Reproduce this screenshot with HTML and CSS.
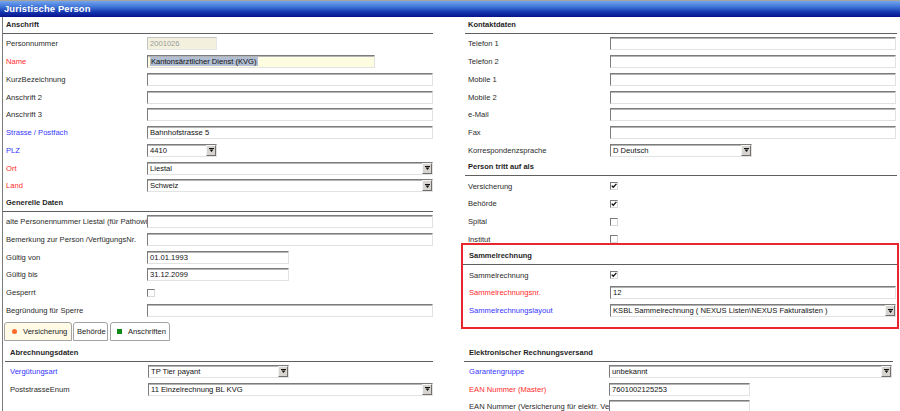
FILE: index.html
```html
<!DOCTYPE html>
<html lang="de">
<head>
<meta charset="utf-8">
<title>Juristische Person</title>
<link rel="stylesheet" href="styles.css">
</head>
<body>
<div class="titlebar">Juristische Person</div>
<div class="content">
  <div class="cols top">
    <div class="col left">
      <div class="section">
        <div class="heading">Anschrift</div>
        <div class="row"><span class="label">Personnummer</span><div class="f w70 ro">2001026</div></div>
        <div class="row"><span class="label red">Name</span><div class="f w228 req"><span class="hl">Kantonsärztlicher Dienst (KVG)</span></div></div>
        <div class="row"><span class="label">KurzBezeichnung</span><div class="f w286"></div></div>
        <div class="row"><span class="label">Anschrift 2</span><div class="f w286"></div></div>
        <div class="row"><span class="label">Anschrift 3</span><div class="f w286"></div></div>
        <div class="row"><span class="label blue">Strasse / Postfach</span><div class="f w286">Bahnhofstrasse 5</div></div>
        <div class="row"><span class="label blue">PLZ</span><div class="f sel w70"><span class="v">4410</span><span class="b"><svg viewBox="0 0 5 4" width="5" height="4"><path d="M0 0h5v1H0zM0.5 1.5h4L2.5 4z" fill="#111"/></svg></span></div></div>
        <div class="row"><span class="label red">Ort</span><div class="f sel w286"><span class="v">Liestal</span><span class="b"><svg viewBox="0 0 5 4" width="5" height="4"><path d="M0 0h5v1H0zM0.5 1.5h4L2.5 4z" fill="#111"/></svg></span></div></div>
        <div class="row"><span class="label red">Land</span><div class="f sel w286"><span class="v">Schweiz</span><span class="b"><svg viewBox="0 0 5 4" width="5" height="4"><path d="M0 0h5v1H0zM0.5 1.5h4L2.5 4z" fill="#111"/></svg></span></div></div>
      </div>
      <div class="section">
        <div class="heading">Generelle Daten</div>
        <div class="row"><span class="label">alte Personennummer Liestal (für Pathowin)</span><div class="f w286"></div></div>
        <div class="row"><span class="label">Bemerkung zur Person /VerfügungsNr.</span><div class="f w286"></div></div>
        <div class="row"><span class="label">Gültig von</span><div class="f w142">01.01.1993</div></div>
        <div class="row"><span class="label">Gültig bis</span><div class="f w142">31.12.2099</div></div>
        <div class="row"><span class="label">Gesperrt</span><span class="chk"></span></div>
        <div class="row"><span class="label">Begründung für Sperre</span><div class="f w286"></div></div>
      </div>
    </div>
    <div class="col right">
      <div class="section">
        <div class="heading">Kontaktdaten</div>
        <div class="row"><span class="label">Telefon 1</span><div class="f w286"></div></div>
        <div class="row"><span class="label">Telefon 2</span><div class="f w286"></div></div>
        <div class="row"><span class="label">Mobile 1</span><div class="f w286"></div></div>
        <div class="row"><span class="label">Mobile 2</span><div class="f w286"></div></div>
        <div class="row"><span class="label">e-Mail</span><div class="f w286"></div></div>
        <div class="row"><span class="label">Fax</span><div class="f w286"></div></div>
        <div class="row"><span class="label">Korrespondenzsprache</span><div class="f sel w142"><span class="v">D Deutsch</span><span class="b"><svg viewBox="0 0 5 4" width="5" height="4"><path d="M0 0h5v1H0zM0.5 1.5h4L2.5 4z" fill="#111"/></svg></span></div></div>
      </div>
      <div class="section">
        <div class="heading">Person tritt auf als</div>
        <div class="row"><span class="label">Versicherung</span><span class="chk"><svg viewBox="0 0 6 6" width="6" height="6"><path d="M0.7 2.6L2.3 4.3L5.4 0.9" fill="none" stroke="#111" stroke-width="1.3"/></svg></span></div>
        <div class="row"><span class="label">Behörde</span><span class="chk"><svg viewBox="0 0 6 6" width="6" height="6"><path d="M0.7 2.6L2.3 4.3L5.4 0.9" fill="none" stroke="#111" stroke-width="1.3"/></svg></span></div>
        <div class="row"><span class="label">Spital</span><span class="chk"></span></div>
        <div class="row"><span class="label">Institut</span><span class="chk"></span></div>
      </div>
      <div class="section sammel">
        <div class="heading">Sammelrechnung</div>
        <div class="row"><span class="label">Sammelrechnung</span><span class="chk"><svg viewBox="0 0 6 6" width="6" height="6"><path d="M0.7 2.6L2.3 4.3L5.4 0.9" fill="none" stroke="#111" stroke-width="1.3"/></svg></span></div>
        <div class="row"><span class="label red">Sammelrechnungsnr.</span><div class="f w286">12</div></div>
        <div class="row"><span class="label blue">Sammelrechnungslayout</span><div class="f sel w286"><span class="v">KSBL Sammelrechnung ( NEXUS Listen\NEXUS Fakturalisten )</span><span class="b"><svg viewBox="0 0 5 4" width="5" height="4"><path d="M0 0h5v1H0zM0.5 1.5h4L2.5 4z" fill="#111"/></svg></span></div></div>
      </div>
    </div>
  </div>

  <div class="tabs">
    <div class="tab active t1"><span class="dot"></span>Versicherung</div>
    <div class="tab t2">Behörde</div>
    <div class="tab t3"><span class="sq"></span>Anschriften</div>
  </div>

  <div class="cols panel">
    <div class="col left">
      <div class="section">
        <div class="heading">Abrechnungsdaten</div>
        <div class="row"><span class="label blue">Vergütungsart</span><div class="f sel w141"><span class="v">TP Tier payant</span><span class="b"><svg viewBox="0 0 5 4" width="5" height="4"><path d="M0 0h5v1H0zM0.5 1.5h4L2.5 4z" fill="#111"/></svg></span></div></div>
        <div class="row"><span class="label">PoststrasseEnum</span><div class="f sel w285"><span class="v">11 Einzelrechnung BL KVG</span><span class="b"><svg viewBox="0 0 5 4" width="5" height="4"><path d="M0 0h5v1H0zM0.5 1.5h4L2.5 4z" fill="#111"/></svg></span></div></div>
      </div>
    </div>
    <div class="col right">
      <div class="section">
        <div class="heading">Elektronischer Rechnungsversand</div>
        <div class="row"><span class="label blue">Garantengruppe</span><div class="f sel w283"><span class="v">unbekannt</span><span class="b"><svg viewBox="0 0 5 4" width="5" height="4"><path d="M0 0h5v1H0zM0.5 1.5h4L2.5 4z" fill="#111"/></svg></span></div></div>
        <div class="row"><span class="label red">EAN Nummer (Master)</span><div class="f w141">7601002125253</div></div>
        <div class="row"><span class="label">EAN Nummer (Versicherung für elektr. Versand)</span><div class="f w141"></div></div>
      </div>
    </div>
  </div>
</div>
<div class="annot"></div>
</body>
</html>
```

FILE: styles.css
```css
* { box-sizing: border-box; }
html, body { margin: 0; padding: 0; }
body {
  position: relative;
  width: 900px;
  height: 411px;
  overflow: hidden;
  background: #fff;
  font-family: "Liberation Sans", Arial, sans-serif;
  font-size: 7.6px;
  color: #2b2b2b;
}
.titlebar {
  height: 17px;
  line-height: 17px;
  padding-left: 4px;
  color: #fff;
  font-weight: bold;
  font-size: 9.4px;
  letter-spacing: 0.15px;
  background: linear-gradient(#a4a39e 0, #a4a39e 1px, #72a4ee 1px, #3f74d6 7px, #1436b0 12px, #08128c 17px);
}
.content {
  margin-left: 2px;
  border-left: 1px solid #7b7b7b;
  height: 394px;
}
.cols { display: flex; }
.top .left { width: 430px; flex: none; }
.top .right { width: 432px; margin-left: 32px; flex: none; }

.heading {
  height: 17px;
  line-height: 16px;
  border-bottom: 1px solid #5f5f5f;
  padding-left: 3px;
  margin-bottom: 1px;
  font-weight: bold;
  color: #1e1e1e;
  font-size: 7.5px;
}
.row {
  height: 17.75px;
  display: flex;
  align-items: center;
}
.label {
  flex: none;
  width: 144px;
  padding-left: 3px;
  white-space: nowrap;
  overflow: hidden;
}
.top .right .label { width: 145px; }
.red { color: #ff2b2b; }
.blue { color: #3434ff; }

.f {
  flex: none;
  height: 13px;
  line-height: 11px;
  padding-left: 2px;
  background: #fff;
  border: 1px solid;
  border-color: #7c7c7c #e2e2e2 #e2e2e2 #7c7c7c;
  box-shadow: inset 0 1px 0 #b4b4b4;
  color: #111;
  white-space: nowrap;
  overflow: hidden;
}
.f.ro {
  background: #f3f1de;
  color: #999;
  border-color: #c4c4c4 #e6e6e6 #e6e6e6 #c4c4c4;
  box-shadow: none;
}
.f.req { background: #fffde1; }
.hl { background: #b1bed3; color: #111; padding: 0 1px; }
.w70 { width: 70px; }
.w141 { width: 141px; }
.w142 { width: 142px; }
.w228 { width: 228px; }
.w283 { width: 283px; }
.w285 { width: 285px; }
.w286 { width: 286px; }

.sel { display: flex; padding-right: 0; }
.sel .v { flex: 1; overflow: hidden; }
.sel .b {
  flex: none;
  width: 10px;
  height: 11px;
  display: flex;
  align-items: center;
  justify-content: center;
  background: #d7d4cf;
  border: 1px solid;
  border-color: #f4f4f4 #6f6f6f #6f6f6f #f4f4f4;
}
.sel .b svg { display: block; }

.chk {
  flex: none;
  width: 8px;
  height: 8px;
  border: 1px solid;
  border-color: #7a7a7a #d8d8d8 #d8d8d8 #7a7a7a;
  background: #fff;
  display: flex;
  align-items: center;
  justify-content: center;
}
.chk svg { display: block; }

.sammel { margin-left: -2px; }
.sammel .heading { padding-left: 6px; }
.sammel .label { width: 147px; padding-left: 6px; }
.top .right .sammel .label { width: 147px; }

.tabs {
  display: flex;
  gap: 1px;
  padding-top: 2.5px;
  padding-left: 1px;
}
.tab {
  height: 19px;
  display: flex;
  align-items: center;
  border: 1px solid #a3a3a3;
  border-radius: 3px 3px 0 0;
  background: #fff;
  color: #222;
  white-space: nowrap;
}
.tab.active { background: #fffbe6; }
.t1 { width: 68px; padding-left: 7px; }
.t2 { width: 35px; padding-left: 3px; }
.t3 { width: 60px; padding-left: 6px; margin-left: 1px; }
.dot {
  width: 5px;
  height: 5px;
  border-radius: 50%;
  background: #ff6a2a;
  margin-right: 6px;
}
.sq {
  width: 5px;
  height: 5px;
  background: #0f8a16;
  margin-right: 6px;
}

.panel { padding-left: 2px; margin-top: 3.5px; }
.panel .left { width: 428px; flex: none; }
.panel .right { width: 429px; margin-left: 31px; flex: none; }
.panel .heading { padding-left: 5px; }
.panel .left .label { width: 143px; padding-left: 5px; }
.panel .right .label { width: 145px; padding-left: 5px; }

.annot {
  position: absolute;
  left: 461px;
  top: 243px;
  width: 438px;
  height: 86px;
  border: 2px solid #e8262d;
  pointer-events: none;
}
```
